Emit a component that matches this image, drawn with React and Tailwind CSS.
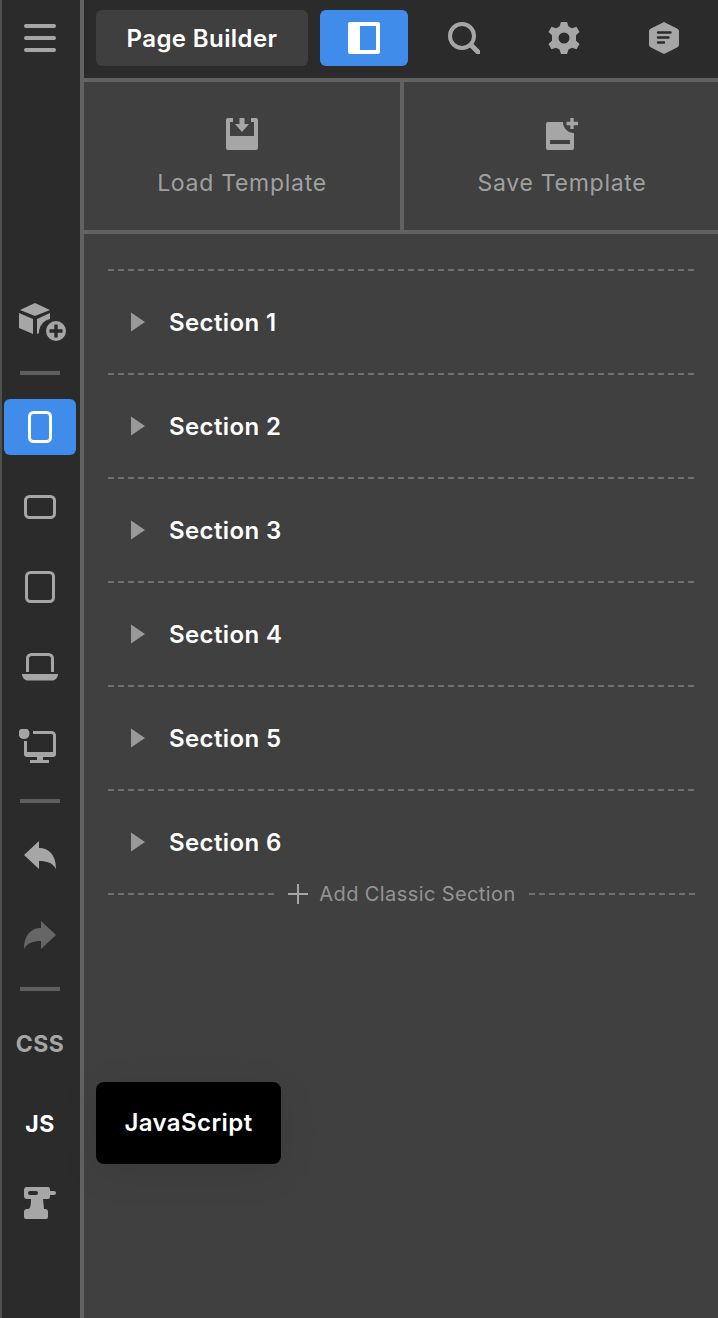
const font = { fontFamily: 'Inter, "Liberation Sans", sans-serif' }

function Divider() {
  return <div className="w-10 h-1 bg-[#5f5f5f]" />
}

function DashedLine() {
  return <div className="h-[2px] flex-1 bg-[repeating-linear-gradient(90deg,#707070_0,#707070_6px,transparent_6px,transparent_10px)]" />
}

function RailItem({ children, active }) {
  return (
    <div className={`w-[72px] h-14 flex items-center justify-center rounded-md ${active ? 'bg-[#3f8ceb]' : ''}`}>
      {children}
    </div>
  )
}

function SectionRow({ name }) {
  return (
    <div className="h-[104px] flex flex-col">
      <div className="flex"><DashedLine /></div>
      <div className="flex-1 flex items-center pl-[23px]">
        <svg width="14" height="20" viewBox="0 0 14 20" className="shrink-0">
          <path d="M0 0.5 L14 10 L0 19.5 Z" fill="#999" />
        </svg>
        <span className="ml-6 pt-0.5 text-[24px] font-semibold text-white tracking-[0.4px]">{name}</span>
      </div>
    </div>
  )
}

export default function App() {
  const sections = ['Section 1', 'Section 2', 'Section 3', 'Section 4', 'Section 5', 'Section 6']

  return (
    <div className="w-[718px] h-[1318px] flex bg-[#404040] overflow-hidden" style={font}>
      {/* left rail */}
      <div className="w-[84px] shrink-0 h-full bg-[#2b2b2b] border-l-2 border-l-[#505050] border-r-4 border-r-[#626262] pr-[2px] flex flex-col items-center">
        <div className="h-[76px] flex items-center justify-center">
          <svg width="32" height="28" viewBox="0 0 32 28" fill="#a6a6a6">
            <rect x="0" y="0" width="32" height="4" rx="2" />
            <rect x="0" y="12" width="32" height="4" rx="2" />
            <rect x="0" y="24" width="32" height="4" rx="2" />
          </svg>
        </div>

        <div className="mt-[226px] ml-[6px] h-10 flex items-center justify-center">
          <svg width="48" height="40" viewBox="0 0 48 40">
            <path d="M1 8 L16 1 L31 8 L16 14 Z" fill="#a6a6a6" />
            <path d="M0 11 L14 17 V32 L0 26 Z" fill="#a6a6a6" />
            <path d="M18 17 L31 11 V17 A14 14 0 0 0 20 31 L18 32 Z" fill="#a6a6a6" />
            <circle cx="37" cy="29" r="10" fill="#a6a6a6" />
            <path d="M37 22.5 V35.5 M30.5 29 H43.5" stroke="#2b2b2b" strokeWidth="3.4" />
          </svg>
        </div>

        <div className="mt-[29px]"><Divider /></div>

        <div className="mt-6 flex flex-col items-center gap-6">
          <RailItem active>
            <svg width="24" height="32" viewBox="0 0 24 32" fill="none" stroke="#fff" strokeWidth="3">
              <rect x="1.5" y="1.5" width="21" height="29" rx="4" />
            </svg>
          </RailItem>
          <RailItem>
            <svg width="32" height="24" viewBox="0 0 32 24" fill="none" stroke="#a6a6a6" strokeWidth="3">
              <rect x="1.5" y="1.5" width="29" height="21" rx="4" />
            </svg>
          </RailItem>
          <RailItem>
            <svg width="30" height="32" viewBox="0 0 30 32" fill="none" stroke="#a6a6a6" strokeWidth="3">
              <rect x="1.5" y="1.5" width="27" height="29" rx="4" />
            </svg>
          </RailItem>
          <RailItem>
            <svg width="36" height="28" viewBox="0 0 36 28">
              <path d="M5.5 19 V5.5 A4 4 0 0 1 9.5 1.5 H26.5 A4 4 0 0 1 30.5 5.5 V19" fill="none" stroke="#a6a6a6" strokeWidth="3" />
              <path d="M0 21 H36 C36 25 33 27.5 30 27.5 H6 C3 27.5 0 25 0 21 Z" fill="#a6a6a6" />
            </svg>
          </RailItem>
          <RailItem>
            <svg width="42" height="36" viewBox="0 0 42 36">
              <circle cx="5" cy="4.5" r="5.5" fill="#a6a6a6" />
              <path d="M14 3.5 H32.5 A3 3 0 0 1 35.5 6.5 V24 M6.5 12 V24" fill="none" stroke="#a6a6a6" strokeWidth="3" />
              <path d="M5 23 H37 V25 A3 3 0 0 1 34 28 H8 A3 3 0 0 1 5 25 Z" fill="#a6a6a6" />
              <rect x="18" y="28" width="6" height="3" fill="#a6a6a6" />
              <rect x="11" y="31" width="19" height="3" fill="#a6a6a6" />
            </svg>
          </RailItem>
        </div>

        <div className="mt-[24px]"><Divider /></div>

        <div className="mt-6 flex flex-col items-center gap-6">
          <RailItem>
            <svg width="32" height="28" viewBox="0 0 32 28">
              <path d="M15 0 V7 C25 7 32 14 32 28 C29 22 23 20 15 20 V28 L0 14 Z" fill="#a6a6a6" />
            </svg>
          </RailItem>
          <RailItem>
            <svg width="32" height="28" viewBox="0 0 32 28">
              <path d="M17 0 V7 C7 7 0 14 0 28 C3 22 9 20 17 20 V28 L32 14 Z" fill="#666" />
            </svg>
          </RailItem>
        </div>

        <div className="mt-[24px]"><Divider /></div>

        <div className="mt-6 flex flex-col items-center gap-6">
          <RailItem>
            <span className="pt-0.5 text-[23px] font-bold text-[#a6a6a6] tracking-[0.5px]">CSS</span>
          </RailItem>
          <RailItem>
            <span className="pt-0.5 text-[23px] font-bold text-white tracking-[0.5px]">JS</span>
          </RailItem>
          <RailItem>
            <svg width="32" height="32" viewBox="0 0 32 32">
              <path
                fillRule="evenodd"
                fill="#a6a6a6"
                d="M3 0 H24 A2 2 0 0 1 26 2 V4 H30 A2 2 0 0 1 30 8 H26 V10 A2 2 0 0 1 24 12 H19 L20 22 H21 A3 3 0 0 1 24 25 V30 A2 2 0 0 1 22 32 H2 A2 2 0 0 1 0 30 V25 A3 3 0 0 1 3 22 H4 C6 22 7 19 7 12 H3 A3 3 0 0 1 0 9 V3 A3 3 0 0 1 3 0 Z M6 4 A2 2 0 0 0 6 8 H12 A2 2 0 0 0 12 4 Z"
              />
            </svg>
          </RailItem>
        </div>
      </div>

      {/* main panel */}
      <div className="flex-1 min-w-0 relative">
        <div className="h-[78px] bg-[#2b2b2b] flex items-start pt-2.5 pl-3">
          <div className="w-[212px] h-14 pt-0.5 rounded-md bg-[#3f3f3f] flex items-center justify-center text-[24px] font-semibold text-white tracking-[0.4px]">
            Page Builder
          </div>
          <div className="ml-3 w-[88px] h-14 rounded-md bg-[#3f8ceb] flex items-center justify-center">
            <svg width="32" height="32" viewBox="0 0 32 32">
              <path fillRule="evenodd" d="M2 0 H30 A2 2 0 0 1 32 2 V30 A2 2 0 0 1 30 32 H2 A2 2 0 0 1 0 30 V2 A2 2 0 0 1 2 0 Z M12 4 V28 H28 V4 Z" fill="#fff" />
            </svg>
          </div>
          <div className="ml-3 w-[88px] h-14 flex items-center justify-center">
            <svg width="32" height="32" viewBox="0 0 32 32" fill="none" stroke="#a6a6a6">
              <circle cx="14" cy="14" r="12" strokeWidth="4" />
              <path d="M23 23 L30 30" strokeWidth="5" strokeLinecap="round" />
            </svg>
          </div>
          <div className="ml-3 w-[88px] h-14 flex items-center justify-center">
            <svg width="32" height="32" viewBox="0 0 32 32">
              <path
                fillRule="evenodd"
                fill="#a6a6a6"
                d="M13 0 H19 L20.5 4.5 L24 6.3 L28.5 4.7 L31.5 10 L28 13.2 V18.8 L31.5 22 L28.5 27.3 L24 25.7 L20.5 27.5 L19 32 H13 L11.5 27.5 L8 25.7 L3.5 27.3 L0.5 22 L4 18.8 V13.2 L0.5 10 L3.5 4.7 L8 6.3 L11.5 4.5 Z M16 10.5 A5.5 5.5 0 1 0 16 21.5 A5.5 5.5 0 1 0 16 10.5 Z"
              />
            </svg>
          </div>
          <div className="ml-3 w-[88px] h-14 flex items-center justify-center">
            <svg width="30" height="32" viewBox="0 0 30 32">
              <path d="M15 0 L28 6.5 A3 3 0 0 1 30 9 V23 A3 3 0 0 1 28 25.5 L15 32 L2 25.5 A3 3 0 0 1 0 23 V9 A3 3 0 0 1 2 6.5 Z" fill="#a6a6a6" />
              <path d="M9 10.5 H21.5 M9 15.5 H19.5 M9 20.5 H15" stroke="#2b2b2b" strokeWidth="2.4" strokeLinecap="round" />
            </svg>
          </div>
        </div>

        <div className="h-[156px] flex border-y-4 border-[#626262]">
          <div className="w-[320px] border-r-4 border-[#626262] flex flex-col items-center pt-9">
            <svg width="32" height="32" viewBox="0 0 32 32">
              <path d="M0 2 A2 2 0 0 1 2 0 H7 V4 H4 V18 H28 V4 H25 V0 H30 A2 2 0 0 1 32 2 V30 A2 2 0 0 1 30 32 H2 A2 2 0 0 1 0 30 Z" fill="#a6a6a6" />
              <path d="M13.5 0 H18.5 V6 H23 L16 14 L9 6 H13.5 Z" fill="#a6a6a6" />
            </svg>
            <span className="mt-4 text-[23px] text-[#a0a0a0] tracking-[0.72px]">Load Template</span>
          </div>
          <div className="flex-1 flex flex-col items-center pt-9">
            <svg width="32" height="32" viewBox="0 0 32 32" className="ml-[2px]">
              <path d="M2 4 H17 A11 11 0 0 0 28 15 V30 A2 2 0 0 1 26 32 H2 A2 2 0 0 1 0 30 V6 A2 2 0 0 1 2 4 Z M4 22 V26 H24 V22 Z" fillRule="evenodd" fill="#a6a6a6" />
              <path d="M26 0 V11 M20.5 5.5 H32" stroke="#a6a6a6" strokeWidth="3.4" />
            </svg>
            <span className="mt-4 ml-[2px] text-[23px] text-[#a0a0a0] tracking-[0.72px]">Save Template</span>
          </div>
        </div>

        <div className="pt-[35px] pl-6 pr-[22px]">
          {sections.map((s) => <SectionRow key={s} name={s} />)}
          <div className="flex items-center h-[2px]">
            <DashedLine />
            <div className="flex items-center px-[13px] text-[#949494]">
              <svg width="20" height="20" viewBox="0 0 20 20" stroke="#a6a6a6" strokeWidth="2">
                <path d="M10 0 V20 M0 10 H20" />
              </svg>
              <span className="ml-[11px] text-[20px] tracking-[0.4px]">Add Classic Section</span>
            </div>
            <DashedLine />
          </div>
        </div>

        {/* tooltip for the JS rail item */}
        <div className="absolute left-3 top-[1082px] w-[185px] h-[82px] rounded-lg bg-black flex items-center justify-center text-[24px] font-semibold text-white tracking-[0.4px] shadow-[0_8px_40px_rgba(0,0,0,0.08)]">
          JavaScript
        </div>
      </div>
    </div>
  )
}
